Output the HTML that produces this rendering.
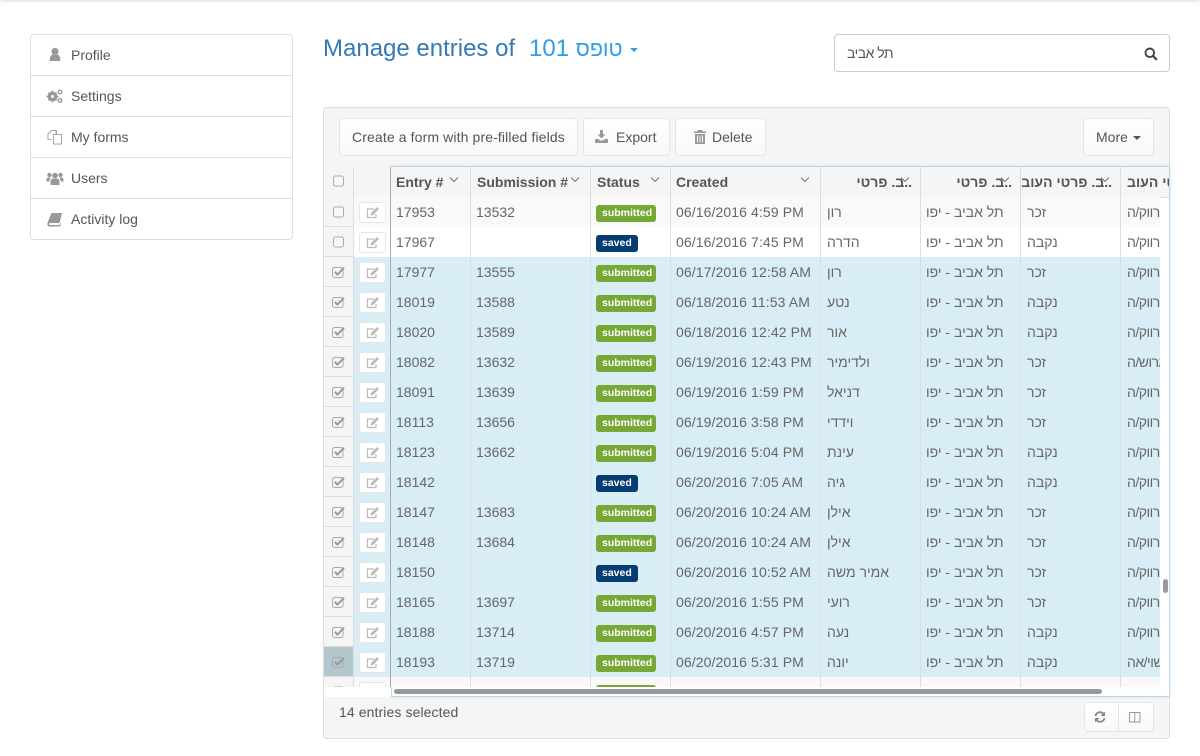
<!DOCTYPE html>
<html><head><meta charset="utf-8"><title>Manage entries</title>
<style>
*{box-sizing:border-box}
html,body{margin:0;padding:0;background:#fff}
body{width:1200px;height:756px;position:relative;overflow:hidden;font:14px/20px "Liberation Sans","Noto Sans CJK JP",sans-serif;color:#555}
.a{position:absolute}
.top{left:0;top:-4px;width:1200px;height:4px;box-shadow:0 0 5px rgba(0,0,0,.22)}
.side{left:30px;top:34px;width:263px;height:206px;border:1px solid #ddd;border-radius:4px}
.side div{position:absolute;left:0;width:261px;height:41px;border-bottom:1px solid #ddd;padding:10px 0 0 40px}
.side div:last-child{border-bottom:0}
.side svg{position:absolute;left:15px;top:11px;width:18px;height:18px;fill:#999}
.panel{left:323px;top:107px;width:847px;height:632px;background:#f5f5f5;border:1px solid #ddd;border-radius:4px}
.btn{position:absolute;top:118px;height:38px;border:1px solid #e5e5e5;border-radius:4px;background:linear-gradient(#fff,#f8f8f8);padding:8px 0 0 12px;color:#555;white-space:nowrap}
.btn svg{position:absolute;fill:#999}
.frame{left:391px;top:166px;width:779px;height:531px;background:#fff;border:1px solid #bcd6ea;box-shadow:0 0 3px #cfe1ef}
.hd{position:absolute;top:167px;height:31px;background:#f5f5f5;border-right:1px solid #ddd;border-bottom:1px solid #ddd;font-weight:bold;padding:5px 0 0 5px;white-space:nowrap;overflow:hidden}
.hd svg{position:absolute;top:9px;width:10px;height:7px;fill:none;stroke:#777;stroke-width:1}
.rt{direction:rtl;padding:5px 8px 0 0;text-align:right}
.r{position:absolute;left:324px;width:836px;height:30px;overflow:hidden}
.r.o{background:#f9f9f9}
.r.w{background:#fff}
.r.s{background:#d9edf7}
.r>*{position:absolute}
.c0{left:0;top:0;width:30px;height:30px;background:#f5f5f5;border-right:1px solid #ddd;border-bottom:1px solid #ddd}
.c0.h{background:#b3c7cc}
.ck{left:8px;top:9px;width:14px;height:13px}
.ed{left:35px;top:5px;width:27px;height:21px;background:#fff;border:1px solid #e6e6e6;border-radius:3px}
.ed svg{position:absolute;left:5px;top:3px;width:15px;height:14px}
.ln{top:0;width:1px;height:30px;background:#ddd}
.ln.d{background:#aaa}
.t{top:5px;white-space:nowrap;color:#666}
.dt{letter-spacing:.1px}
.l{top:8px;height:17px;border-radius:3px;color:#fff;font-weight:bold;font-size:10.5px;line-height:16px;padding:0 6px;left:272px}
.l.g{background:#75a835;width:60px}
.l.n{background:#053d73;width:42px}
.x{width:33px;overflow:hidden;white-space:nowrap;height:20px;top:5px;color:#666;letter-spacing:-.5px}
</style></head><body>
<svg width="0" height="0" style="position:absolute">
<symbol id="b" viewBox="0 0 14 13"><rect x="1.500" y="1" width="10" height="10" rx="2" fill="#f8f8f8" stroke="#aaa"/></symbol>
<symbol id="c" viewBox="0 0 14 13"><rect x=".5" y="1.500" width="10.500" height="10" rx="2" fill="none" stroke="#aaa"/><path d="M2.800 5.800l2.600 2.800L12 1.800" fill="none" stroke="#999" stroke-width="2"/></symbol>
<symbol id="e" viewBox="0 0 15 14"><path d="M11 8v3.500H2.500V3H9" fill="none" stroke="#bbb" stroke-width="1.200"/><path d="M5.500 9.500l.5-2.500 6-6 2 2-6 6z" fill="#bbb"/></symbol>
<symbol id="v" viewBox="0 0 10 7"><path d="M1 1.500l4 4 4-4"/></symbol>
</svg>
<div class="a top"></div>

<div class="a side">
<div style="top:0"><svg viewBox="0 0 18 18"><circle cx="9" cy="5.500" r="3.600"/><path d="M3.800 15c-.4-4 1-6 3-6.500h4.400c2 .5 3.400 2.500 3 6.500z"/></svg>Profile</div>
<div style="top:41px"><svg viewBox="0 0 18 18"><circle cx="6.500" cy="9.500" r="3.500" fill="none" stroke="#999" stroke-width="3"/><circle cx="14" cy="5" r="1.800" fill="none" stroke="#999" stroke-width="1.400"/><circle cx="14" cy="13.500" r="1.800" fill="none" stroke="#999" stroke-width="1.400"/><path d="M6.500 3.500v12M.5 9.500h12M2.500 5.500l8 8M10.500 5.500l-8 8" stroke="#999" stroke-width="1.500"/><circle cx="6.500" cy="9.500" r="1.500" fill="#fff"/></svg>Settings</div>
<div style="top:82px"><svg viewBox="0 0 18 18"><path d="M5.500 11.500H2V6l3.500-3.500H10V6M7.500 6.500h3V2.500M7.500 6.500H15.500v9.500H7.500z" fill="none" stroke="#a9a0ad" stroke-width="1"/></svg>My forms</div>
<div style="top:123px"><svg viewBox="0 0 18 18"><circle cx="9" cy="6.500" r="2.800"/><circle cx="3.500" cy="6" r="2.200"/><circle cx="14.500" cy="6" r="2.200"/><path d="M4.500 16v-3.500c0-2 1-3 2.500-3h4c1.500 0 2.500 1 2.500 3V16z"/><path d="M.5 12.500v-2c0-1.200.8-2 2-2h2L3 12.500zM17.500 12.500v-2c0-1.200-.8-2-2-2h-2l1.500 4z"/></svg>Users</div>
<div style="top:164px"><svg viewBox="0 0 18 18"><path d="M5.500 3h10.500l-2.500 10H4c-1 0-1 2 0 2h9.500l.8-2 .7.500-1 3H3.500c-2 0-2.500-2-2-3.500z"/></svg>Activity log</div>
</div>

<div class="a" style="left:323px;top:34px;font-size:24px;line-height:30px;color:#337ab7;white-space:nowrap">Manage entries of</div>
<div class="a" style="left:529px;top:34px;font-size:24px;line-height:30px;color:#2e9fe6;white-space:nowrap" dir="ltr">101 <span dir="rtl" style="font-size:21.500px">טופס</span></div>
<div class="a" style="left:630px;top:48px;border:4px solid transparent;border-top-color:#2e9fe6;border-bottom:0"></div>

<div class="a" style="left:834px;top:34px;width:336px;height:38px;border:1px solid #ccc;border-radius:4px;background:#fff"></div>
<div class="a" style="left:847px;top:43px;color:#555;letter-spacing:-.5px" dir="rtl">תל אביב</div>
<svg class="a" style="left:1144px;top:47px" width="14" height="14" viewBox="0 0 14 14"><circle cx="5.800" cy="5.800" r="4.300" fill="none" stroke="#444" stroke-width="1.900"/><path d="M9 9l3.800 3.800" stroke="#444" stroke-width="2.200"/></svg>

<div class="a panel"></div>
<div class="btn" style="left:339px;width:239px;letter-spacing:.12px">Create a form with pre-filled fields</div>
<div class="btn" style="left:583px;width:87px;padding-left:32px"><svg style="left:11px;top:11px" width="14" height="14" viewBox="0 0 14 14"><path d="M5 0h3v4.500h2.500L6.500 8.500 2.500 4.500H5zM0 9h3.500l1.500 1.500h3L9.500 9H13v4H0z"/></svg>Export</div>
<div class="btn" style="left:675px;width:91px;padding-left:36px"><svg style="left:18px;top:11px" width="12" height="14" viewBox="0 0 12 14"><path d="M4 0h4l1 1.500h3V3H0V1.500h3zM1 4h10v10H1zM3 5.500v7h1v-7zM5.500 5.500v7h1v-7zM8 5.500v7h1v-7z" fill-rule="evenodd"/></svg>Delete</div>
<div class="btn" style="left:1083px;width:71px">More<span class="a" style="left:49px;top:17px;border:4px solid transparent;border-top-color:#555;border-bottom:0"></span></div>

<div class="a frame"></div>

<div class="hd" style="left:324px;width:30px;padding:0"><svg style="left:8px;top:8px;width:14px;height:13px;stroke:none"><use href="#b"/></svg></div>
<div class="hd" style="left:354px;width:37px;border-right:1px solid #aaa"></div>
<div class="hd" style="left:391px;width:80px">Entry #<svg viewBox="0 0 10 7" style="left:58px"><use href="#v"/></svg></div>
<div class="hd" style="left:471px;width:120px;padding-left:6px">Submission #<svg viewBox="0 0 10 7" style="left:99px"><use href="#v"/></svg></div>
<div class="hd" style="left:591px;width:80px;padding-left:6px">Status<svg viewBox="0 0 10 7" style="left:59px"><use href="#v"/></svg></div>
<div class="hd" style="left:671px;width:150px">Created<svg viewBox="0 0 10 7" style="left:129px"><use href="#v"/></svg></div>
<div class="hd rt" style="left:821px;width:100px">..ב. פרטי<svg viewBox="0 0 10 7" style="left:79px"><use href="#v"/></svg></div>
<div class="hd rt" style="left:921px;width:100px">..ב. פרטי<svg viewBox="0 0 10 7" style="left:79px"><use href="#v"/></svg></div>
<div class="hd rt" style="left:1021px;width:100px">..ב. פרטי העוב<svg viewBox="0 0 10 7" style="left:79px"><use href="#v"/></svg></div>
<div class="hd" style="left:1121px;width:48px;border-right:0;padding:5px 0 0 6px;text-align:left">פרטי העוב</div>

<div class="r o" style="top:197px"><div class="c0"></div><svg class="ck"><use href="#b"/></svg><div class="ed"><svg><use href="#e"/></svg></div><i class="ln d" style="left:66px"></i><i class="ln" style="left:146px"></i><i class="ln" style="left:266px"></i><i class="ln" style="left:346px"></i><i class="ln" style="left:496px"></i><i class="ln" style="left:596px"></i><i class="ln" style="left:696px"></i><i class="ln" style="left:796px"></i><span class="t" style="left:72px">17953</span><span class="t" style="left:152px">13532</span><span class="l g">submitted</span><span class="t dt" style="left:352px">06/16/2016 4:59 PM</span><span class="t" style="left:503px">רון</span><span class="t" style="left:602px">תל אביב - יפו</span><span class="t" style="left:703px">זכר</span><div class="x" style="left:803px">רווק/ה</div></div>

<div class="r w" style="top:227px"><div class="c0"></div><svg class="ck"><use href="#b"/></svg><div class="ed"><svg><use href="#e"/></svg></div><i class="ln d" style="left:66px"></i><i class="ln" style="left:146px"></i><i class="ln" style="left:266px"></i><i class="ln" style="left:346px"></i><i class="ln" style="left:496px"></i><i class="ln" style="left:596px"></i><i class="ln" style="left:696px"></i><i class="ln" style="left:796px"></i><span class="t" style="left:72px">17967</span><span class="l n">saved</span><span class="t dt" style="left:352px">06/16/2016 7:45 PM</span><span class="t" style="left:503px">הדרה</span><span class="t" style="left:602px">תל אביב - יפו</span><span class="t" style="left:703px">נקבה</span><div class="x" style="left:803px">רווק/ה</div></div>

<div class="r s" style="top:257px"><div class="c0"></div><svg class="ck"><use href="#c"/></svg><div class="ed"><svg><use href="#e"/></svg></div><i class="ln d" style="left:66px"></i><i class="ln" style="left:146px"></i><i class="ln" style="left:266px"></i><i class="ln" style="left:346px"></i><i class="ln" style="left:496px"></i><i class="ln" style="left:596px"></i><i class="ln" style="left:696px"></i><i class="ln" style="left:796px"></i><span class="t" style="left:72px">17977</span><span class="t" style="left:152px">13555</span><span class="l g">submitted</span><span class="t dt" style="left:352px">06/17/2016 12:58 AM</span><span class="t" style="left:503px">רון</span><span class="t" style="left:602px">תל אביב - יפו</span><span class="t" style="left:703px">זכר</span><div class="x" style="left:803px">רווק/ה</div></div>

<div class="r s" style="top:287px"><div class="c0"></div><svg class="ck"><use href="#c"/></svg><div class="ed"><svg><use href="#e"/></svg></div><i class="ln d" style="left:66px"></i><i class="ln" style="left:146px"></i><i class="ln" style="left:266px"></i><i class="ln" style="left:346px"></i><i class="ln" style="left:496px"></i><i class="ln" style="left:596px"></i><i class="ln" style="left:696px"></i><i class="ln" style="left:796px"></i><span class="t" style="left:72px">18019</span><span class="t" style="left:152px">13588</span><span class="l g">submitted</span><span class="t dt" style="left:352px">06/18/2016 11:53 AM</span><span class="t" style="left:503px">נטע</span><span class="t" style="left:602px">תל אביב - יפו</span><span class="t" style="left:703px">נקבה</span><div class="x" style="left:803px">רווק/ה</div></div>

<div class="r s" style="top:317px"><div class="c0"></div><svg class="ck"><use href="#c"/></svg><div class="ed"><svg><use href="#e"/></svg></div><i class="ln d" style="left:66px"></i><i class="ln" style="left:146px"></i><i class="ln" style="left:266px"></i><i class="ln" style="left:346px"></i><i class="ln" style="left:496px"></i><i class="ln" style="left:596px"></i><i class="ln" style="left:696px"></i><i class="ln" style="left:796px"></i><span class="t" style="left:72px">18020</span><span class="t" style="left:152px">13589</span><span class="l g">submitted</span><span class="t dt" style="left:352px">06/18/2016 12:42 PM</span><span class="t" style="left:503px">אור</span><span class="t" style="left:602px">תל אביב - יפו</span><span class="t" style="left:703px">נקבה</span><div class="x" style="left:803px">רווק/ה</div></div>

<div class="r s" style="top:347px"><div class="c0"></div><svg class="ck"><use href="#c"/></svg><div class="ed"><svg><use href="#e"/></svg></div><i class="ln d" style="left:66px"></i><i class="ln" style="left:146px"></i><i class="ln" style="left:266px"></i><i class="ln" style="left:346px"></i><i class="ln" style="left:496px"></i><i class="ln" style="left:596px"></i><i class="ln" style="left:696px"></i><i class="ln" style="left:796px"></i><span class="t" style="left:72px">18082</span><span class="t" style="left:152px">13632</span><span class="l g">submitted</span><span class="t dt" style="left:352px">06/19/2016 12:43 PM</span><span class="t" style="left:503px">ולדימיר</span><span class="t" style="left:602px">תל אביב - יפו</span><span class="t" style="left:703px">זכר</span><div class="x" style="left:803px">גרוש/ה</div></div>

<div class="r s" style="top:377px"><div class="c0"></div><svg class="ck"><use href="#c"/></svg><div class="ed"><svg><use href="#e"/></svg></div><i class="ln d" style="left:66px"></i><i class="ln" style="left:146px"></i><i class="ln" style="left:266px"></i><i class="ln" style="left:346px"></i><i class="ln" style="left:496px"></i><i class="ln" style="left:596px"></i><i class="ln" style="left:696px"></i><i class="ln" style="left:796px"></i><span class="t" style="left:72px">18091</span><span class="t" style="left:152px">13639</span><span class="l g">submitted</span><span class="t dt" style="left:352px">06/19/2016 1:59 PM</span><span class="t" style="left:503px">דניאל</span><span class="t" style="left:602px">תל אביב - יפו</span><span class="t" style="left:703px">זכר</span><div class="x" style="left:803px">רווק/ה</div></div>

<div class="r s" style="top:407px"><div class="c0"></div><svg class="ck"><use href="#c"/></svg><div class="ed"><svg><use href="#e"/></svg></div><i class="ln d" style="left:66px"></i><i class="ln" style="left:146px"></i><i class="ln" style="left:266px"></i><i class="ln" style="left:346px"></i><i class="ln" style="left:496px"></i><i class="ln" style="left:596px"></i><i class="ln" style="left:696px"></i><i class="ln" style="left:796px"></i><span class="t" style="left:72px">18113</span><span class="t" style="left:152px">13656</span><span class="l g">submitted</span><span class="t dt" style="left:352px">06/19/2016 3:58 PM</span><span class="t" style="left:503px">וידדי</span><span class="t" style="left:602px">תל אביב - יפו</span><span class="t" style="left:703px">זכר</span><div class="x" style="left:803px">רווק/ה</div></div>

<div class="r s" style="top:437px"><div class="c0"></div><svg class="ck"><use href="#c"/></svg><div class="ed"><svg><use href="#e"/></svg></div><i class="ln d" style="left:66px"></i><i class="ln" style="left:146px"></i><i class="ln" style="left:266px"></i><i class="ln" style="left:346px"></i><i class="ln" style="left:496px"></i><i class="ln" style="left:596px"></i><i class="ln" style="left:696px"></i><i class="ln" style="left:796px"></i><span class="t" style="left:72px">18123</span><span class="t" style="left:152px">13662</span><span class="l g">submitted</span><span class="t dt" style="left:352px">06/19/2016 5:04 PM</span><span class="t" style="left:503px">עינת</span><span class="t" style="left:602px">תל אביב - יפו</span><span class="t" style="left:703px">נקבה</span><div class="x" style="left:803px">רווק/ה</div></div>

<div class="r s" style="top:467px"><div class="c0"></div><svg class="ck"><use href="#c"/></svg><div class="ed"><svg><use href="#e"/></svg></div><i class="ln d" style="left:66px"></i><i class="ln" style="left:146px"></i><i class="ln" style="left:266px"></i><i class="ln" style="left:346px"></i><i class="ln" style="left:496px"></i><i class="ln" style="left:596px"></i><i class="ln" style="left:696px"></i><i class="ln" style="left:796px"></i><span class="t" style="left:72px">18142</span><span class="l n">saved</span><span class="t dt" style="left:352px">06/20/2016 7:05 AM</span><span class="t" style="left:503px">גיה</span><span class="t" style="left:602px">תל אביב - יפו</span><span class="t" style="left:703px">נקבה</span><div class="x" style="left:803px">רווק/ה</div></div>

<div class="r s" style="top:497px"><div class="c0"></div><svg class="ck"><use href="#c"/></svg><div class="ed"><svg><use href="#e"/></svg></div><i class="ln d" style="left:66px"></i><i class="ln" style="left:146px"></i><i class="ln" style="left:266px"></i><i class="ln" style="left:346px"></i><i class="ln" style="left:496px"></i><i class="ln" style="left:596px"></i><i class="ln" style="left:696px"></i><i class="ln" style="left:796px"></i><span class="t" style="left:72px">18147</span><span class="t" style="left:152px">13683</span><span class="l g">submitted</span><span class="t dt" style="left:352px">06/20/2016 10:24 AM</span><span class="t" style="left:503px">אילן</span><span class="t" style="left:602px">תל אביב - יפו</span><span class="t" style="left:703px">זכר</span><div class="x" style="left:803px">רווק/ה</div></div>

<div class="r s" style="top:527px"><div class="c0"></div><svg class="ck"><use href="#c"/></svg><div class="ed"><svg><use href="#e"/></svg></div><i class="ln d" style="left:66px"></i><i class="ln" style="left:146px"></i><i class="ln" style="left:266px"></i><i class="ln" style="left:346px"></i><i class="ln" style="left:496px"></i><i class="ln" style="left:596px"></i><i class="ln" style="left:696px"></i><i class="ln" style="left:796px"></i><span class="t" style="left:72px">18148</span><span class="t" style="left:152px">13684</span><span class="l g">submitted</span><span class="t dt" style="left:352px">06/20/2016 10:24 AM</span><span class="t" style="left:503px">אילן</span><span class="t" style="left:602px">תל אביב - יפו</span><span class="t" style="left:703px">זכר</span><div class="x" style="left:803px">רווק/ה</div></div>

<div class="r s" style="top:557px"><div class="c0"></div><svg class="ck"><use href="#c"/></svg><div class="ed"><svg><use href="#e"/></svg></div><i class="ln d" style="left:66px"></i><i class="ln" style="left:146px"></i><i class="ln" style="left:266px"></i><i class="ln" style="left:346px"></i><i class="ln" style="left:496px"></i><i class="ln" style="left:596px"></i><i class="ln" style="left:696px"></i><i class="ln" style="left:796px"></i><span class="t" style="left:72px">18150</span><span class="l n">saved</span><span class="t dt" style="left:352px">06/20/2016 10:52 AM</span><span class="t" style="left:503px">אמיר משה</span><span class="t" style="left:602px">תל אביב - יפו</span><span class="t" style="left:703px">זכר</span><div class="x" style="left:803px">רווק/ה</div></div>

<div class="r s" style="top:587px"><div class="c0"></div><svg class="ck"><use href="#c"/></svg><div class="ed"><svg><use href="#e"/></svg></div><i class="ln d" style="left:66px"></i><i class="ln" style="left:146px"></i><i class="ln" style="left:266px"></i><i class="ln" style="left:346px"></i><i class="ln" style="left:496px"></i><i class="ln" style="left:596px"></i><i class="ln" style="left:696px"></i><i class="ln" style="left:796px"></i><span class="t" style="left:72px">18165</span><span class="t" style="left:152px">13697</span><span class="l g">submitted</span><span class="t dt" style="left:352px">06/20/2016 1:55 PM</span><span class="t" style="left:503px">רועי</span><span class="t" style="left:602px">תל אביב - יפו</span><span class="t" style="left:703px">זכר</span><div class="x" style="left:803px">רווק/ה</div></div>

<div class="r s" style="top:617px"><div class="c0"></div><svg class="ck"><use href="#c"/></svg><div class="ed"><svg><use href="#e"/></svg></div><i class="ln d" style="left:66px"></i><i class="ln" style="left:146px"></i><i class="ln" style="left:266px"></i><i class="ln" style="left:346px"></i><i class="ln" style="left:496px"></i><i class="ln" style="left:596px"></i><i class="ln" style="left:696px"></i><i class="ln" style="left:796px"></i><span class="t" style="left:72px">18188</span><span class="t" style="left:152px">13714</span><span class="l g">submitted</span><span class="t dt" style="left:352px">06/20/2016 4:57 PM</span><span class="t" style="left:503px">נעה</span><span class="t" style="left:602px">תל אביב - יפו</span><span class="t" style="left:703px">נקבה</span><div class="x" style="left:803px">רווק/ה</div></div>

<div class="r s" style="top:647px"><div class="c0 h"></div><svg class="ck"><use href="#c"/></svg><div class="ed"><svg><use href="#e"/></svg></div><i class="ln d" style="left:66px"></i><i class="ln" style="left:146px"></i><i class="ln" style="left:266px"></i><i class="ln" style="left:346px"></i><i class="ln" style="left:496px"></i><i class="ln" style="left:596px"></i><i class="ln" style="left:696px"></i><i class="ln" style="left:796px"></i><span class="t" style="left:72px">18193</span><span class="t" style="left:152px">13719</span><span class="l g">submitted</span><span class="t dt" style="left:352px">06/20/2016 5:31 PM</span><span class="t" style="left:503px">יונה</span><span class="t" style="left:602px">תל אביב - יפו</span><span class="t" style="left:703px">נקבה</span><div class="x" style="left:803px">נשוי/אה</div></div>

<div class="r o" style="top:677px;height:10px"><div class="c0"></div><svg class="ck"><use href="#b"/></svg><div class="ed"></div><i class="ln d" style="left:66px"></i><i class="ln" style="left:146px"></i><i class="ln" style="left:266px"></i><i class="ln" style="left:346px"></i><i class="ln" style="left:496px"></i><i class="ln" style="left:596px"></i><i class="ln" style="left:696px"></i><i class="ln" style="left:796px"></i><span class="l g"></span></div>

<div class="a" style="left:324px;top:687px;width:67px;height:10px;background:#fff"></div>
<div class="a" style="left:394px;top:689px;width:708px;height:5px;background:#999;border-radius:3px"></div>
<div class="a" style="left:1163px;top:579px;width:5px;height:14px;background:#999;border-radius:3px"></div>

<div class="a" style="left:339px;top:702px;color:#555;letter-spacing:.1px">14 entries selected</div>
<div class="a" style="left:1084px;top:702px;width:70px;height:30px;border:1px solid #e5e5e5;border-radius:4px;background:linear-gradient(#fff,#f8f8f8)"><i class="a" style="left:33px;top:0;width:1px;height:28px;background:#e5e5e5"></i>
<svg class="a" style="left:9px;top:8px" width="12" height="12" viewBox="0 0 12 12"><path d="M1.500 5a4.500 4.500 0 0 1 8-2M10.500 7a4.500 4.500 0 0 1-8 2" fill="none" stroke="#888" stroke-width="1.800"/><path d="M11 .5V5H6.500zM1 11.500V7h4.500z" fill="#888"/></svg>
<svg class="a" style="left:44px;top:8px" width="12" height="12" viewBox="0 0 12 12"><path d="M.5 1.500h10.500v9.500H.5zM5.750 1.500v9.500M.5 1.500h10.500" fill="none" stroke="#999"/></svg></div>
</body></html>
